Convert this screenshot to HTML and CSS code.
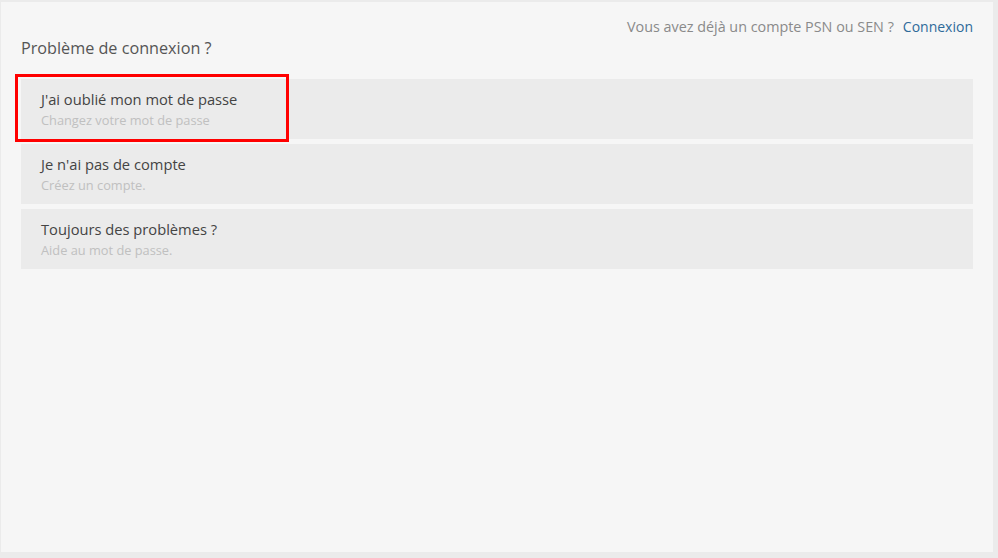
FILE: index.html
```html
<!DOCTYPE html>
<html lang="fr">
<head>
<meta charset="utf-8">
<title>Problème de connexion</title>
<link rel="stylesheet" href="styles.css">
</head>
<body>
<div class="panel">
  <div class="topline">Vous avez déjà un compte PSN ou SEN ?<a class="login" href="#">Connexion</a></div>
  <h1 class="title">Problème de connexion ?</h1>
  <ul class="options">
    <li class="option highlighted">
      <div class="opt-title">J'ai oublié mon mot de passe</div>
      <div class="opt-sub">Changez votre mot de passe</div>
      <span class="marker"></span>
    </li>
    <li class="option">
      <div class="opt-title">Je n'ai pas de compte</div>
      <div class="opt-sub">Créez un compte.</div>
    </li>
    <li class="option">
      <div class="opt-title">Toujours des problèmes ?</div>
      <div class="opt-sub">Aide au mot de passe.</div>
    </li>
  </ul>
</div>
</body>
</html>
```
FILE: styles.css
```css
html, body {
  margin: 0;
  padding: 0;
}
body {
  background: #ebebeb;
  font-family: "Open Sans", "Noto Sans", sans-serif;
  width: 998px;
  height: 558px;
  overflow: hidden;
}
.panel {
  box-sizing: border-box;
  margin: 2px 0 0 1px;
  width: 992px;
  height: 550px;
  background: #f6f6f6;
  padding: 15px 20px 0 20px;
}
.topline {
  text-align: right;
  font-size: 14.35px;
  line-height: 20px;
  color: #8a8a8a;
}
.login {
  font-size: 14px;
  color: #2e6a9a;
  text-decoration: none;
  margin-left: 9px;
}
.title {
  margin: 0;
  font-size: 16.2px;
  font-weight: 400;
  line-height: 22px;
  color: #555;
}
.options {
  list-style: none;
  margin: 20px 0 0 0;
  padding: 0;
  display: flex;
  flex-direction: column;
  gap: 5px;
}
.option {
  position: relative;
  box-sizing: border-box;
  height: 60px;
  background: #ebebeb;
  padding: 10px 20px;
}
.opt-title {
  font-size: 14.7px;
  line-height: 20px;
  color: #444;
}
.opt-sub {
  font-size: 12.8px;
  line-height: 20px;
  margin-top: 1px;
  color: #c0c0c0;
}
.marker {
  position: absolute;
  left: -6px;
  top: -5px;
  width: 268px;
  height: 62px;
  border: 3px solid #ff0000;
}
```
